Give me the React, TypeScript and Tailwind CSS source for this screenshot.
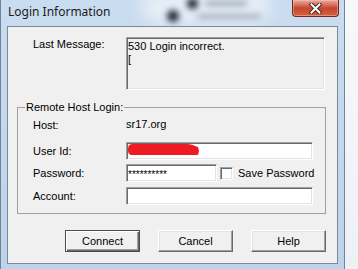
export default function App() {
  const sunken =
    "border border-t-[#a0a0a0] border-l-[#a0a0a0] border-b-white border-r-white shadow-[inset_1px_1px_0_#696969,inset_-1px_-1px_0_#e3e3e3]"
  const btn =
    "w-[75px] h-[22px] flex items-center justify-center bg-[#f0f0f0] border border-t-white border-l-white border-b-[#696969] border-r-[#696969] shadow-[inset_-1px_-1px_0_#a0a0a0,inset_1px_1px_0_#e3e3e3]"

  return (
    <div className="flex w-[358px] h-[269px] overflow-hidden bg-[#f3f5f8] font-['Liberation_Sans',Arial,sans-serif] text-[11px] leading-[13px] text-black">
      <div className="relative flex flex-col w-[345px] h-[269px] overflow-hidden border-l border-r border-[#6f8399] bg-gradient-to-b from-[#cadcf0] to-[#bdd3ea]">
        {/* blurred desktop behind the glass */}
        <div className="absolute left-[140px] top-[-10px] w-[130px] h-[34px] rounded-full bg-[#e6eef6] blur-[8px]" />
        <div className="absolute left-[186px] top-[-2px] w-[11px] h-[11px] rounded-full bg-[#1c2631] blur-[3px]" />
        <div className="absolute left-[166px] top-[10px] w-[12px] h-[12px] rounded-full bg-[#1c2631] blur-[3px]" />
        <div className="absolute left-[204px] top-[1px] w-[42px] h-[5px] rounded-full bg-[#9aa6b3] blur-[3px]" />
        <div className="absolute left-[196px] top-[14px] w-[64px] h-[5px] rounded-full bg-[#a4afbb] blur-[3px]" />

        <div className="relative flex h-[26px] items-start">
          <span className="ml-[7px] mt-[3px] font-['Noto_Sans',sans-serif] text-[12px] leading-[17px] text-[#1b1b1b]">
            Login Information
          </span>
          <div className="ml-auto mr-[5px] w-[47px] h-[17px] flex items-center justify-center rounded-b-[4px] border border-t-0 border-[#6b2a1f] bg-gradient-to-b from-[#e9ad9f] via-[#c8452e] to-[#d4603f] shadow-[inset_0_0_0_1px_rgba(255,200,190,0.45)]">
            <svg width="13" height="11" viewBox="0 0 13 11">
              <path d="M2.5 1.5 L10.5 9.5 M10.5 1.5 L2.5 9.5" stroke="#3a2a28" strokeWidth="4" strokeLinecap="square" />
              <path d="M2.5 1.5 L10.5 9.5 M10.5 1.5 L2.5 9.5" stroke="#ffffff" strokeWidth="2" strokeLinecap="square" />
            </svg>
          </div>
        </div>

        <div className="relative ml-[6px] w-[331px] h-[238px] border border-[#7b8898] bg-[#f0f0f0] flex flex-col">
          <div className="flex mt-[10px] pl-[25px]">
            <span className="w-[93px] pt-[1px]">Last Message:</span>
            <div className={`w-[199px] h-[53px] bg-[#f0f0f0] pt-[2px] pl-[1px] whitespace-pre ${sunken}`}>
              {"530 Login incorrect.\n["}
            </div>
          </div>

          <fieldset className="ml-[9px] mt-[11px] w-[309px] border border-[#a0a0a0]">
            <legend className="ml-[7px] px-[1px] leading-[13px]">Remote Host Login:</legend>
            <div className="flex flex-col pl-[15px] pt-[2px] pb-[8px]">
              <div className="flex items-center h-[18px]">
                <span className="w-[93px]">Host:</span>
                <span className="-mt-[2px]">sr17.org</span>
              </div>
              <div className="flex items-center h-[18px] mt-[8px]">
                <span className="w-[93px]">User Id:</span>
                <div className={`w-[187px] h-[18px] bg-white ${sunken}`}>
                  <svg width="74" height="14" viewBox="0 0 74 14" className="mt-[0px]">
                    <path
                      d="M6 1 L60 1 C64 1 66 2 68 3 L71 4 L72 8 L71 12 L6 12 C2 12 1 10 1 7 C1 3 2 1 6 1 Z"
                      fill="#ed1c24"
                    />
                  </svg>
                </div>
              </div>
              <div className="flex items-center h-[18px] mt-[4px]">
                <span className="w-[93px]">Password:</span>
                <div className={`w-[91px] h-[18px] bg-white pl-[1px] flex items-center ${sunken}`}>
                  <span className="text-[10px] leading-[10px] mt-[3px]">**********</span>
                </div>
                <div className={`ml-[3px] w-[13px] h-[13px] bg-white ${sunken}`} />
                <span className="ml-[5px]">Save Password</span>
              </div>
              <div className="flex items-center h-[18px] mt-[5px]">
                <span className="w-[93px]">Account:</span>
                <div className={`w-[187px] h-[18px] bg-white ${sunken}`} />
              </div>
            </div>
          </fieldset>

          <div className="flex gap-[18px] ml-[57px] mt-[16px]">
            <div className="w-[75px] h-[22px] flex items-center justify-center bg-[#f0f0f0] border border-[#4a4a4a] shadow-[inset_1px_1px_0_#ffffff,inset_-1px_-1px_0_#696969,inset_-2px_-2px_0_#a0a0a0]">
              Connect
            </div>
            <div className={btn}>Cancel</div>
            <div className={btn}>Help</div>
          </div>
        </div>
      </div>
      <div className="flex-1 bg-gradient-to-b from-[#f7f8fa] to-[#eef1f4]" />
    </div>
  )
}
